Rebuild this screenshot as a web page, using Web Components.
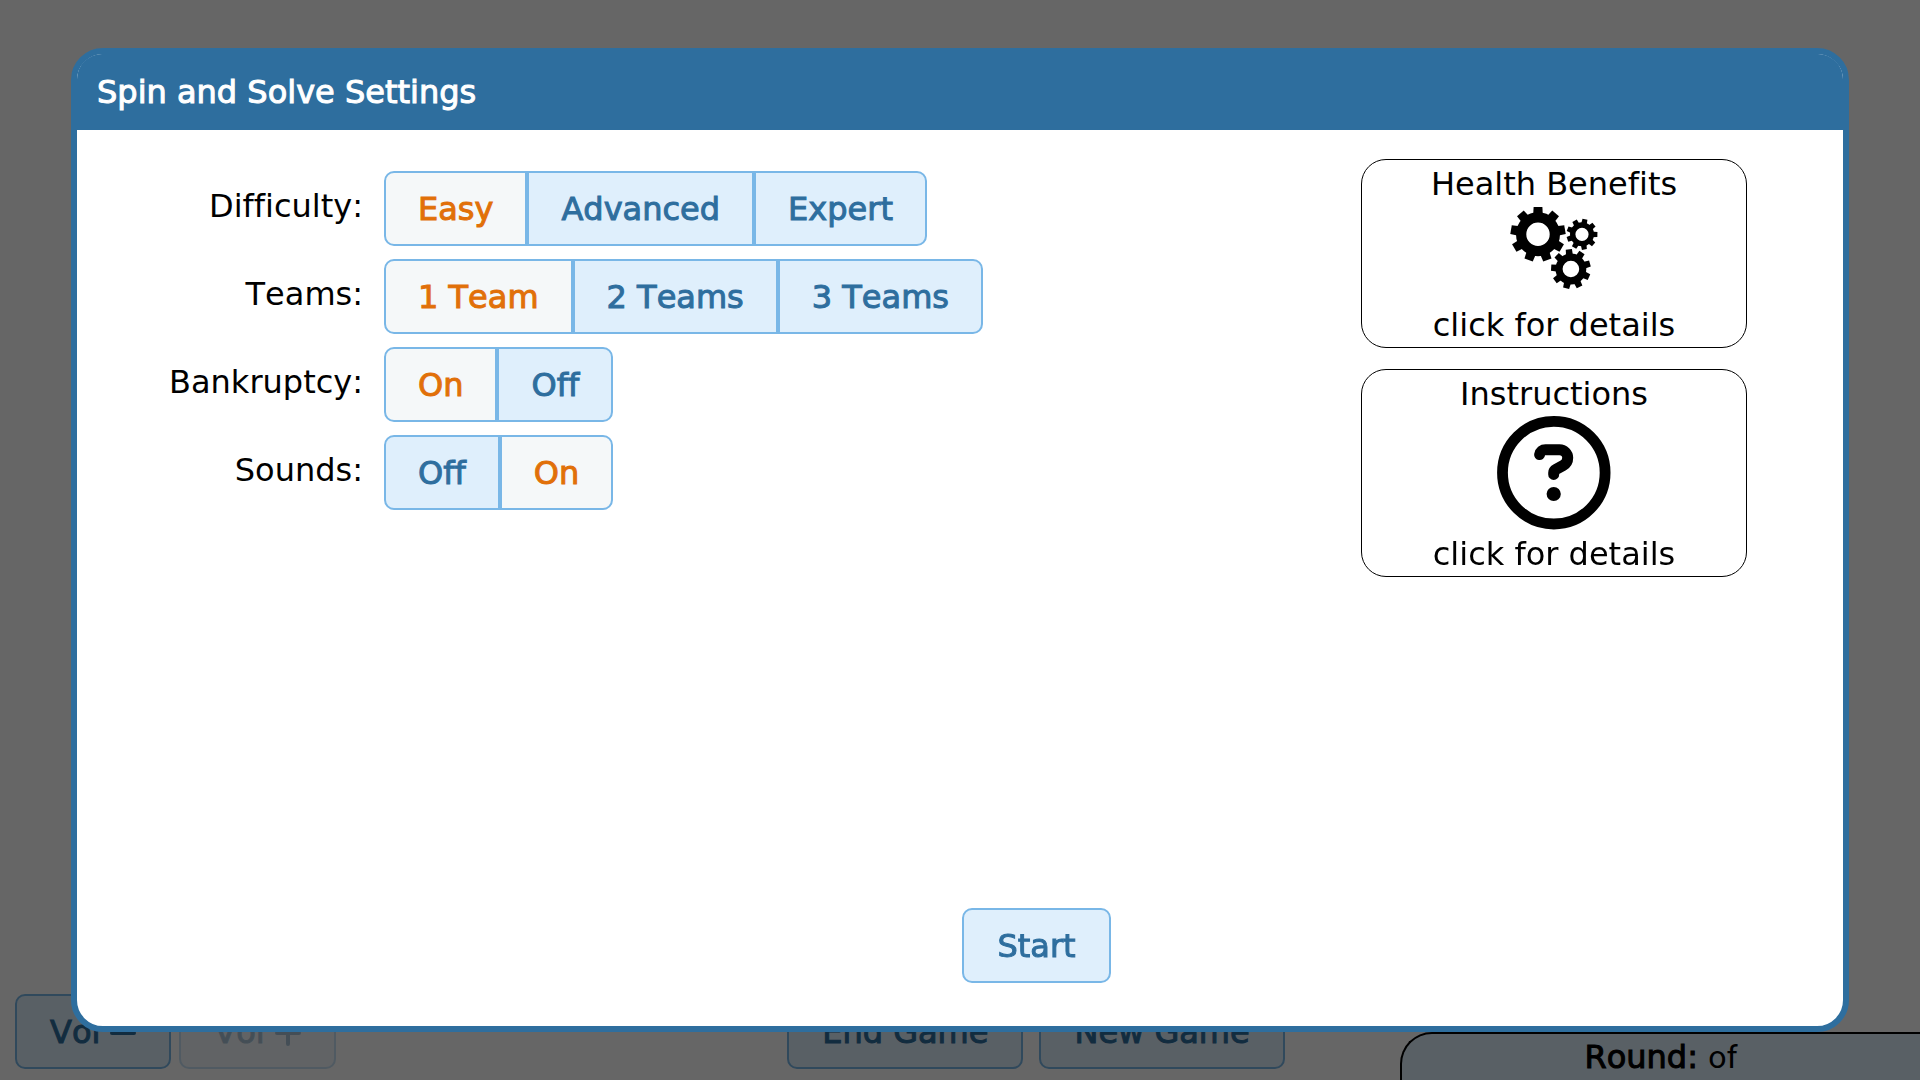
<!DOCTYPE html>
<html lang="en">
<head>
<meta charset="utf-8">
<title>Spin and Solve</title>
<style>
  html, body { margin: 0; min-height: 100%; background: #fff; }
  body {
    font: 32px/40px "DejaVu Sans", Verdana, sans-serif;
    font-variant-ligatures: none;
    font-kerning: none;
    color: #000;
    --blue: #2e6e9e;
    --line: #79b7e7;
    --face: #dfeffc;
    --active-face: #f5f8f9;
    --active-text: #e17009;
  }
</style>
</head>
<body>
<game-page></game-page>
<settings-dialog heading="Spin and Solve Settings">
  <option-row label="Difficulty:" name="difficulty" options="Easy|Advanced|Expert" selected="0"></option-row>
  <option-row label="Teams:" name="teams" options="1 Team|2 Teams|3 Teams" selected="0"></option-row>
  <option-row label="Bankruptcy:" name="bankruptcy" options="On|Off" selected="0"></option-row>
  <option-row label="Sounds:" name="sounds" options="Off|On" selected="1"></option-row>
  <info-card slot="aside" heading="Health Benefits"><gears-icon></gears-icon></info-card>
  <info-card slot="aside" heading="Instructions"><help-icon></help-icon></info-card>
  <push-button slot="actions">Start</push-button>
</settings-dialog>

<script>
class BaseElement extends HTMLElement {
  connectedCallback() {
    if (this.shadowRoot) return;
    this.attachShadow({ mode: "open" }).innerHTML = this.render();
  }
}

class PushButton extends BaseElement {
  render() {
    return `
      <style>
        :host { display: block; }
        button {
          display: flex; align-items: center; gap: 10px;
          box-sizing: border-box; margin: 0; padding: 17px 33px 15px;
          font: inherit; line-height: 39px; color: var(--blue); white-space: nowrap;
          font-kerning: none; font-variant-ligatures: none;
          -webkit-text-stroke: 1px currentColor;
          background: var(--face); border: 2px solid var(--line); border-radius: 10px;
        }
        button:disabled { opacity: .4; }
        ::slotted(svg) { display: block; }
      </style>
      <button type="button" ${this.hasAttribute("disabled") ? "disabled" : ""}><slot></slot></button>`;
  }
}
customElements.define("push-button", PushButton);

class OptionRow extends BaseElement {
  render() {
    const name = this.getAttribute("name");
    const selected = Number(this.getAttribute("selected"));
    const items = this.getAttribute("options").split("|").map((text, i) => `
      <label><input type="radio" name="${name}" ${i === selected ? "checked" : ""}><span>${text}</span></label>`).join("");
    return `
      <style>
        :host { display: flex; align-items: center; gap: 21px; }
        .name { width: 286px; text-align: right; padding-bottom: 5px; }
        .group { display: flex; }
        label {
          position: relative; box-sizing: border-box; padding: 17px 32px 15px; line-height: 39px;
          color: var(--blue); background: var(--face); border: 2px solid var(--line);
          -webkit-text-stroke: 1px currentColor; white-space: nowrap; cursor: pointer;
        }
        label:first-child { border-radius: 10px 0 0 10px; }
        label:last-child { border-radius: 0 10px 10px 0; }
        label:has(input:checked) { color: var(--active-text); background: var(--active-face); }
        input { position: absolute; inset: 0; margin: 0; appearance: none; cursor: pointer; }
      </style>
      <div class="name" id="name">${this.getAttribute("label")}</div>
      <div class="group" role="radiogroup" aria-labelledby="name">${items}</div>`;
  }
}
customElements.define("option-row", OptionRow);

class GearsIcon extends BaseElement {
  gear(cx, cy, outer, body, hole, tooth, offset) {
    let teeth = "";
    for (let i = 0; i < 9; i++) {
      teeth += `<path d="M${-tooth / 2} ${-outer}H${tooth / 2}L${tooth / 2 + 0.4} ${-body + 3}H${-tooth / 2 - 0.4}Z" transform="rotate(${offset + i * 40})"/>`;
    }
    const ring = (body + hole) / 2;
    return `<g transform="translate(${cx} ${cy})">${teeth}<circle r="${ring}" fill="none" stroke="#000" stroke-width="${body - hole}"/></g>`;
  }
  render() {
    return `
      <style>:host { display: block; } svg { display: block; }</style>
      <svg width="100" height="101" viewBox="0 0 100 101" aria-hidden="true">
        ${this.gear(34, 30.3, 27.4, 22, 11.7, 8.8, 0)}
        ${this.gear(78, 30.3, 15.4, 12, 6.6, 5, 11)}
        ${this.gear(66.9, 65, 19.8, 15.4, 8.3, 6.2, -6)}
      </svg>`;
  }
}
customElements.define("gears-icon", GearsIcon);

class HelpIcon extends BaseElement {
  render() {
    return `
      <style>:host { display: block; } svg { display: block; }</style>
      <svg width="120" height="120" viewBox="0 0 120 120" aria-hidden="true">
        <circle cx="59.8" cy="58.7" r="51.3" fill="none" stroke="#000" stroke-width="10.8"/>
        <path d="M45.6 40.6C46 37.5 48.5 35.7 51.5 35.7H65.5C70 35.7 73.7 39.3 73.7 43.8C73.7 47 72 49.9 69.3 51.4L62 55.4C60.5 56.2 59.7 57.2 59.7 58.8V60.4" fill="none" stroke="#000" stroke-width="11" stroke-linecap="round" stroke-linejoin="round"/>
        <circle cx="59.7" cy="80" r="7.1"/>
      </svg>`;
  }
}
customElements.define("help-icon", HelpIcon);

class InfoCard extends BaseElement {
  render() {
    return `
      <style>
        :host { display: block; }
        button {
          display: flex; flex-direction: column; align-items: center; width: 100%;
          box-sizing: border-box; margin: 0; padding: 4px 0 2px;
          font: inherit; color: #000; background: #fff; border: 1px solid #000; border-radius: 25px;
          cursor: pointer;
        }
      </style>
      <button type="button"><span>${this.getAttribute("heading")}</span><slot></slot><span>click for details</span></button>`;
  }
}
customElements.define("info-card", InfoCard);

class SettingsDialog extends BaseElement {
  render() {
    return `
      <style>
        :host {
          position: fixed; inset: 0; display: flex; box-sizing: border-box;
          padding: 48px 71px; background: rgba(0, 0, 0, .6);
        }
        section {
          flex: 1; display: flex; flex-direction: column;
          background: #fff; border: 6px solid var(--blue); border-radius: 32px;
        }
        h1 {
          margin: 0; padding: 1px 20px 0; font: inherit; line-height: 75px; color: #fff;
          font-kerning: none; font-variant-ligatures: none;
          background: var(--blue); border-radius: 25px 25px 0 0; -webkit-text-stroke: 1px currentColor;
        }
        .body { flex: 1; display: flex; justify-content: space-between; padding: 29px 96px 0 0; }
        .options { display: flex; flex-direction: column; gap: 13px; padding-top: 12px; }
        .aside { display: flex; flex-direction: column; gap: 21px; width: 386px; }
        .actions { display: flex; justify-content: center; padding: 0 0 43px 153px; }
      </style>
      <section role="dialog" aria-labelledby="title">
        <h1 id="title">${this.getAttribute("heading")}</h1>
        <div class="body">
          <div class="options"><slot></slot></div>
          <div class="aside"><slot name="aside"></slot></div>
        </div>
        <div class="actions"><slot name="actions"></slot></div>
      </section>`;
  }
}
customElements.define("settings-dialog", SettingsDialog);

class GamePage extends BaseElement {
  render() {
    return `
      <style>
        :host { display: flex; flex-direction: column; justify-content: flex-end; min-height: 100vh; }
        footer { display: grid; grid-template-columns: 41% 1fr 520px; align-items: end; }
        .volume, .game { display: flex; padding-bottom: 11px; }
        .volume { gap: 8px; padding-left: 15px; }
        .game { gap: 16px; }
        .round {
          box-sizing: border-box; padding: 3px 0; text-align: center;
          background: var(--face); border: 2px solid #000; border-width: 2px 0 0 2px;
          border-radius: 32px 0 0 0;
        }
        b { font-weight: normal; -webkit-text-stroke: 1px currentColor; }
        .value { font-family: Roboto, sans-serif; }
      </style>
      <footer>
        <div class="volume">
          <push-button>Vol <svg width="26" height="28" viewBox="0 0 26 28" role="img" aria-label="down"><path d="M2 14H24" stroke="#2e6e9e" stroke-width="4" stroke-linecap="round"/></svg></push-button>
          <push-button disabled>Vol <svg width="26" height="28" viewBox="0 0 26 28" role="img" aria-label="up"><path d="M2 14H24M13 3V25" stroke="#2e6e9e" stroke-width="4" stroke-linecap="round"/></svg></push-button>
        </div>
        <div class="game">
          <push-button>End Game</push-button>
          <push-button>New Game</push-button>
        </div>
        <div class="round"><b>Round:</b> <span class="value">of</span></div>
      </footer>`;
  }
}
customElements.define("game-page", GamePage);
</script>
</body>
</html>
